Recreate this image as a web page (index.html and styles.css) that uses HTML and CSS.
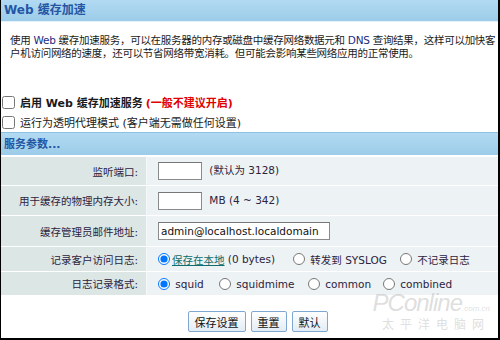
FILE: index.html
```html
<!DOCTYPE html>
<html lang="zh-CN">
<head>
    <meta charset="UTF-8">
    <title>Web 缓存加速</title>
    <link rel="stylesheet" href="styles.css">
</head>
<body>
    <div class="frame">
        <div class="bar title">Web 缓存加速</div>
        <p class="desc">使用 <span class="en">Web</span> 缓存加速服务，可以在服务器的内存或磁盘中缓存网络数据元和 <span class="en">DNS</span> 查询结果，这样可以加快客<br>户机访问网络的速度，还可以节省网络带宽消耗。但可能会影响某些网络应用的正常使用。</p>
        <div class="opts">
            <label class="opt strong"><input type="checkbox"> 启用 Web 缓存加速服务 <span class="warn">(一般不建议开启)</span></label>
            <label class="opt"><input type="checkbox"> 运行为透明代理模式 (客户端无需做任何设置)</label>
        </div>
        <div class="bar sub">服务参数...</div>
        <table class="params">
            <tr class="r1">
                <td class="key">监听端口:</td>
                <td class="val"><input class="field short" type="text"> <span class="hint">(默认为 3128)</span></td>
            </tr>
            <tr class="r2">
                <td class="key">用于缓存的物理内存大小:</td>
                <td class="val"><input class="field short" type="text"> <span class="hint">MB (4 ~ 342)</span></td>
            </tr>
            <tr class="r3">
                <td class="key">缓存管理员邮件地址:</td>
                <td class="val"><input class="field long" type="text" value="admin@localhost.localdomain"></td>
            </tr>
            <tr class="r4">
                <td class="key">记录客户访问日志:</td>
                <td class="val">
                    <div class="radios">
                        <label class="w-local"><input type="radio" name="log" checked> <a href="#">保存在本地</a> (0 bytes)</label>
                        <label class="w-syslog"><input type="radio" name="log"> 转发到 SYSLOG</label>
                        <label><input type="radio" name="log"> 不记录日志</label>
                    </div>
                </td>
            </tr>
            <tr class="r5">
                <td class="key">日志记录格式:</td>
                <td class="val">
                    <div class="radios">
                        <label class="w-squid"><input type="radio" name="fmt" checked> squid</label>
                        <label class="w-mime"><input type="radio" name="fmt"> squidmime</label>
                        <label class="w-common"><input type="radio" name="fmt"> common</label>
                        <label><input type="radio" name="fmt"> combined</label>
                    </div>
                </td>
            </tr>
        </table>
        <div class="actions">
            <button class="btn">保存设置</button>
            <button class="btn">重置</button>
            <button class="btn">默认</button>
        </div>
        <div class="watermark">
            <div class="wm-logo">PConline<span>.com.cn</span></div>
            <div class="wm-cn">太平洋电脑网</div>
        </div>
    </div>
</body>
</html>
```

FILE: styles.css
```css
html, body {
    margin: 0;
    padding: 0;
    background: #fff;
}
body {
    font-family: "DejaVu Sans", "Noto Sans CJK SC", sans-serif;
    font-size: 10.5px;
    color: #2b2340;
}
.frame {
    position: relative;
    width: 497px;
    height: 338px;
    border-left: 1px solid #000;
    border-right: 2px solid #000;
    border-bottom: 2px solid #000;
    overflow: hidden;
}
.bar {
    background: linear-gradient(#b2daf2, #9ccce9);
    color: #2456a4;
    font-weight: bold;
    padding-left: 3px;
    box-sizing: border-box;
}
.title {
    height: 22px;
    line-height: 20px;
    font-size: 12px;
    border-bottom: 1px solid #e4f2fa;
}
.sub {
    height: 24px;
    line-height: 23px;
    font-size: 11px;
    border-top: 1px solid #8cc1e2;
    border-bottom: 1px solid #fff;
}
.desc {
    margin: 12px 6px 0 9px;
    line-height: 13px;
    color: #1a1a1a;
    white-space: nowrap;
    letter-spacing: -0.28px;
}
.desc .en {
    color: #1c2a80;
}
.opts {
    margin-top: 32px;
}
.opt {
    display: flex;
    align-items: center;
    height: 20px;
    font-size: 11px;
    color: #1a1a1a;
}
.opt input {
    width: 13px;
    height: 13px;
    margin: 0 5px 0 1px;
}
.opt.strong {
    font-weight: bold;
}
.warn {
    color: #e00000;
    margin-left: 3px;
}
.params {
    width: 100%;
    border-collapse: collapse;
}
.params td {
    border-top: 1px solid #fff;
    padding: 0;
}
.key {
    width: 137px;
    padding-right: 8px !important;
    text-align: right;
    background: #dbe6e5;
    border-right: 1px solid #f4f8f8;
}
.val {
    background: #edf2f4;
    padding-left: 11px !important;
}
.r1 td { height: 28px; }
.r2 td { height: 29px; }
.r3 td { height: 30px; }
.r4 td { height: 24px; }
.r5 td { height: 23px; }
.field {
    height: 18px;
    box-sizing: border-box;
    border: 1px solid #8a8a8a;
    border-top-color: #777;
    font: inherit;
    color: #111;
    padding: 0 2px;
    vertical-align: middle;
}
.field.short {
    width: 44px;
}
.field.long {
    width: 172px;
}
.hint {
    margin-left: 4px;
}
.radios {
    display: flex;
    align-items: center;
}
.radios label {
    display: flex;
    align-items: center;
    white-space: pre;
}
.radios input {
    width: 12px;
    height: 12px;
    margin: 0 2px 0 0;
}
.radios a {
    color: #0c6e6e;
}
.w-local { width: 135px; }
.w-syslog { width: 107px; }
.w-squid { width: 61px; }
.w-mime { width: 89px; }
.w-common { width: 75px; }
.actions {
    display: flex;
    justify-content: center;
    gap: 5px;
    margin-top: 16px;
    padding-left: 16px;
}
.btn {
    height: 21px;
    padding: 0 6px;
    font: inherit;
    font-size: 11px;
    color: #111;
    border: 1px solid #7ea7d2;
    border-radius: 2px;
    background: linear-gradient(#ffffff, #e3ecf5);
}
.watermark {
    position: absolute;
    right: 8px;
    bottom: 6px;
    color: rgba(170, 170, 170, 0.4);
    text-align: right;
    pointer-events: none;
}
.wm-logo {
    font-family: "Liberation Sans", sans-serif;
    font-size: 24px;
    font-style: italic;
    letter-spacing: -1px;
}
.wm-logo span {
    font-size: 8px;
    letter-spacing: 0;
}
.wm-cn {
    font-size: 12px;
    letter-spacing: 6px;
    margin-top: -2px;
}
```
